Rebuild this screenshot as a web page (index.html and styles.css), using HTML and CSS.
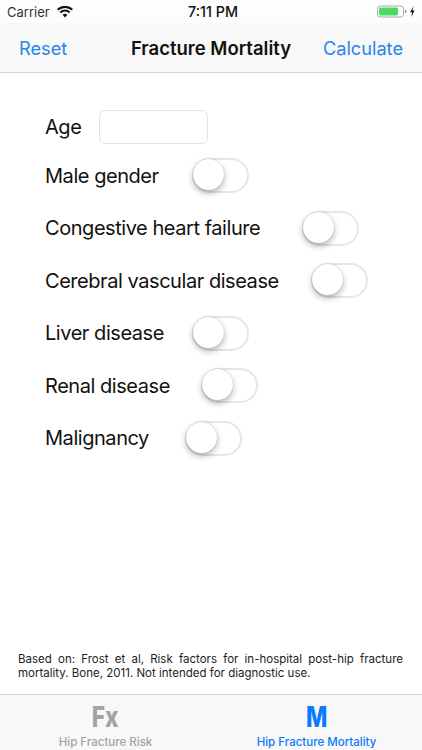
FILE: index.html
```html
<!DOCTYPE html>
<html lang="en">
<head>
  <meta charset="UTF-8" />
  <meta name="viewport" content="width=device-width, initial-scale=1.0"/>
  <title>Fracture Mortality</title>
  <link rel="stylesheet" href="styles.css">
</head>
<body>
  <div class="app">
    <div class="status-bar">
      <div class="status-left">
        <span>Carrier</span>
        <svg class="wifi" width="16" height="12" viewBox="0 0 18 13">
          <path d="M9 12.6 6.300 9.700a3.900 3.900 0 0 1 5.400 0z" fill="#111"/>
          <path d="M4.500 7.800a6.500 6.500 0 0 1 9 0l1.500-1.600a8.700 8.700 0 0 0-12 0z" fill="#111"/>
          <path d="M1.600 4.900a10.600 10.600 0 0 1 14.800 0L18 3.200a12.900 12.900 0 0 0-18 0z" fill="#111"/>
        </svg>
      </div>
      <div class="status-time">7:11 PM</div>
      <div class="status-right">
        <svg width="38" height="13" viewBox="0 0 38 13">
          <rect x="0.500" y="1" width="26" height="11" rx="2.800" fill="#fff" stroke="#a9a9a9"/>
          <rect x="2" y="2.500" width="19" height="8" rx="1.400" fill="#4cd964"/>
          <path d="M28 5v3c.9-.2 1.300-.8 1.300-1.500S28.900 5.200 28 5z" fill="#777"/>
          <path d="M36.700 1 33.100 7.200h2l-.8 4.800 3.200-6.400h-2.100z" fill="#111"/>
        </svg>
      </div>
    </div>

    <div class="nav-bar">
      <span class="nav-btn">Reset</span>
      <span class="nav-title">Fracture Mortality</span>
      <span class="nav-btn nav-btn-right">Calculate</span>
    </div>

    <div class="form">
      <div class="row row-age">
        <span class="label">Age</span>
        <input class="age-input" type="text"/>
      </div>
      <div class="row">
        <span class="label">Male gender</span>
        <span class="switch gap-male"></span>
      </div>
      <div class="row">
        <span class="label">Congestive heart failure</span>
        <span class="switch gap-heart"></span>
      </div>
      <div class="row">
        <span class="label">Cerebral vascular disease</span>
        <span class="switch gap-cerebral"></span>
      </div>
      <div class="row">
        <span class="label">Liver disease</span>
        <span class="switch gap-liver"></span>
      </div>
      <div class="row">
        <span class="label">Renal disease</span>
        <span class="switch gap-renal"></span>
      </div>
      <div class="row">
        <span class="label">Malignancy</span>
        <span class="switch gap-malignancy"></span>
      </div>
    </div>

    <p class="note">Based on: Frost et al, Risk factors for in-hospital post-hip fracture mortality. Bone, 2011. Not intended for diagnostic use.</p>

    <div class="tab-bar">
      <div class="tab">
        <span class="tab-icon">Fx</span>
        <span class="tab-label">Hip Fracture Risk</span>
      </div>
      <div class="tab active">
        <span class="tab-icon">M</span>
        <span class="tab-label">Hip Fracture Mortality</span>
      </div>
    </div>
  </div>
</body>
</html>
```

FILE: styles.css
```css
body {
  font-family: Inter, "Liberation Sans", sans-serif;
  margin: 0;
  background: #fff;
  color: #111;
}

.app {
  display: flex;
  flex-direction: column;
  width: 422px;
  height: 750px;
  overflow: hidden;
}

.status-bar {
  display: grid;
  grid-template-columns: 1fr auto 1fr;
  align-items: center;
  height: 23px;
  padding: 0 7px;
  font-size: 13px;
  background: #fdfdfd;
}

.status-left {
  display: flex;
  align-items: center;
  gap: 7px;
  color: #333;
}

.status-time {
  font-weight: 500;
  font-size: 14.300px;
  margin-left: 4px;
}

.status-right {
  display: flex;
  justify-content: flex-end;
  align-items: center;
}

.nav-bar {
  display: grid;
  grid-template-columns: 1fr auto 1fr;
  align-items: center;
  height: 49px;
  padding: 0 19px;
  background: #f8f8f8;
  border-bottom: 1px solid #d4d4d4;
}

.nav-btn {
  color: #2a84ea;
  font-size: 18.200px;
}

.nav-btn-right {
  text-align: right;
}

.nav-title {
  font-size: 18.500px;
  font-weight: 600;
}

.form {
  flex: 1;
  display: flex;
  flex-direction: column;
  padding: 37px 0 0 45px;
}

.row {
  display: flex;
  align-items: center;
  height: 35px;
  margin-bottom: 17.500px;
}

.row-age {
  height: 34px;
  margin-bottom: 14px;
}

.label {
  font-size: 20px;
  letter-spacing: -0.450px;
}

.age-input {
  width: 109px;
  height: 34px;
  box-sizing: border-box;
  margin-left: 18px;
  padding: 0;
  border: 1px solid #e4e4e4;
  border-radius: 6px;
  background: #fff;
}

.switch {
  position: relative;
  display: block;
  box-sizing: border-box;
  width: 57px;
  height: 35px;
  border: 2px solid #e6e6e6;
  border-radius: 18px;
  background: #fff;
}

.switch::after {
  content: "";
  position: absolute;
  top: -1px;
  left: -1px;
  width: 31px;
  height: 31px;
  border-radius: 50%;
  background: #fff;
  box-shadow: 0 3px 6px rgba(0,0,0,0.3), 0 0 1px rgba(0,0,0,0.25);
}

.gap-male { margin-left: 33px; }
.gap-heart { margin-left: 42px; }
.gap-cerebral { margin-left: 32px; }
.gap-liver { margin-left: 28px; }
.gap-renal { margin-left: 31px; }
.gap-malignancy { margin-left: 36px; }

.note {
  margin: 0;
  padding: 0 19px 14px 18px;
  font-size: 11.500px;
  line-height: 13.500px;
  text-align: justify;
  color: #222;
}

.tab-bar {
  display: flex;
  height: 55px;
  background: #f8f8f8;
  border-top: 1px solid #d4d4d4;
}

.tab {
  flex: 1;
  display: flex;
  flex-direction: column;
  align-items: center;
  color: #a3a3a3;
}

.tab.active {
  color: #0a7aff;
}

.tab-icon {
  font-size: 29px;
  font-weight: 800;
  line-height: 27px;
  margin-top: 8px;
  transform: scaleX(0.78);
}

.tab-label {
  font-size: 11.500px;
  font-weight: 500;
  line-height: 14px;
  margin-top: 5px;
}
```
